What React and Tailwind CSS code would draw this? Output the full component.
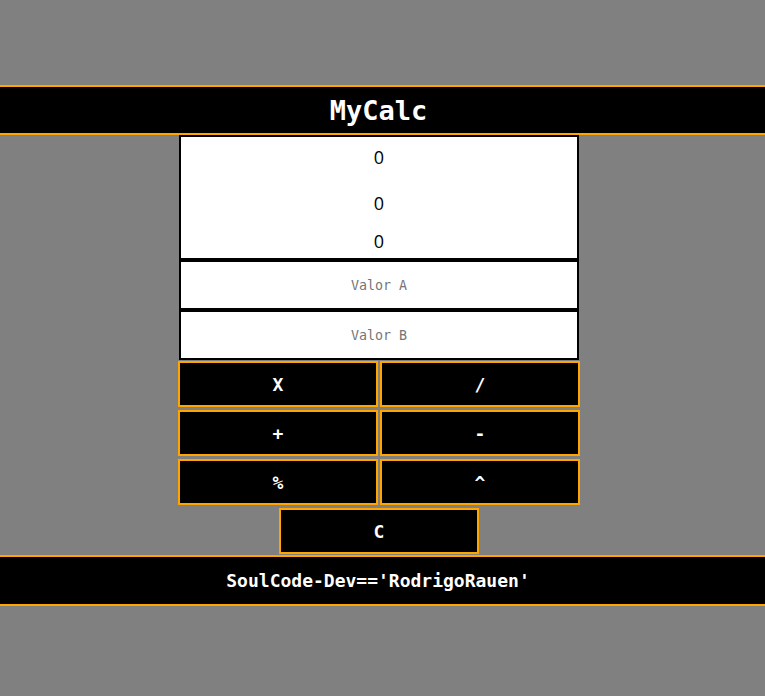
import React from "react";

const mono = "font-['DejaVu_Sans_Mono',monospace]";

function Btn({ children }) {
  return (
    <button
      className={`w-[200px] h-[46px] bg-black border-2 border-[#ffa500] text-white font-bold text-[18px] ${mono} flex items-center justify-center`}
    >
      {children}
    </button>
  );
}

export default function App() {
  return (
    <div className="w-[765px] h-[696px] bg-[#808080] flex flex-col">
      <div className="mt-[85px] h-[50px] bg-black border-y-2 border-[#ffa500] flex items-center justify-center pr-[8px] pt-[2px]">
        <h1 className={`text-white font-bold text-[27px] ${mono}`}>MyCalc</h1>
      </div>
      <div className="flex flex-col items-center pr-[7px]">
        <div className="w-[400px] h-[125px] bg-white border-2 border-black flex flex-col font-['Open_Sans',sans-serif] text-[18px] text-black">
          <div className="h-[41px] flex items-center justify-center">0</div>
          <div className="h-[51px] flex items-center justify-center">0</div>
          <div className="h-[24px] flex items-center justify-center">0</div>
        </div>
        <input
          placeholder="Valor A"
          className={`w-[400px] h-[50px] bg-white border-2 border-black text-center text-[13.33px] ${mono} placeholder:text-[#757575] outline-none`}
        />
        <input
          placeholder="Valor B"
          className={`w-[400px] h-[50px] bg-white border-2 border-black text-center text-[13.33px] ${mono} placeholder:text-[#757575] outline-none`}
        />
        <div className="mt-px grid grid-cols-2 gap-x-[2px] gap-y-[3px] w-[402px]">
          <Btn>X</Btn>
          <Btn>/</Btn>
          <Btn>+</Btn>
          <Btn>-</Btn>
          <Btn>%</Btn>
          <Btn>^</Btn>
        </div>
        <div className="mt-[3px]">
          <Btn>C</Btn>
        </div>
      </div>
      <div className="mt-px h-[51px] bg-black border-y-2 border-[#ffa500] flex items-center justify-center pr-[9px]">
        <p className={`text-white font-bold text-[18px] ${mono}`}>SoulCode-Dev=='RodrigoRauen'</p>
      </div>
    </div>
  );
}
